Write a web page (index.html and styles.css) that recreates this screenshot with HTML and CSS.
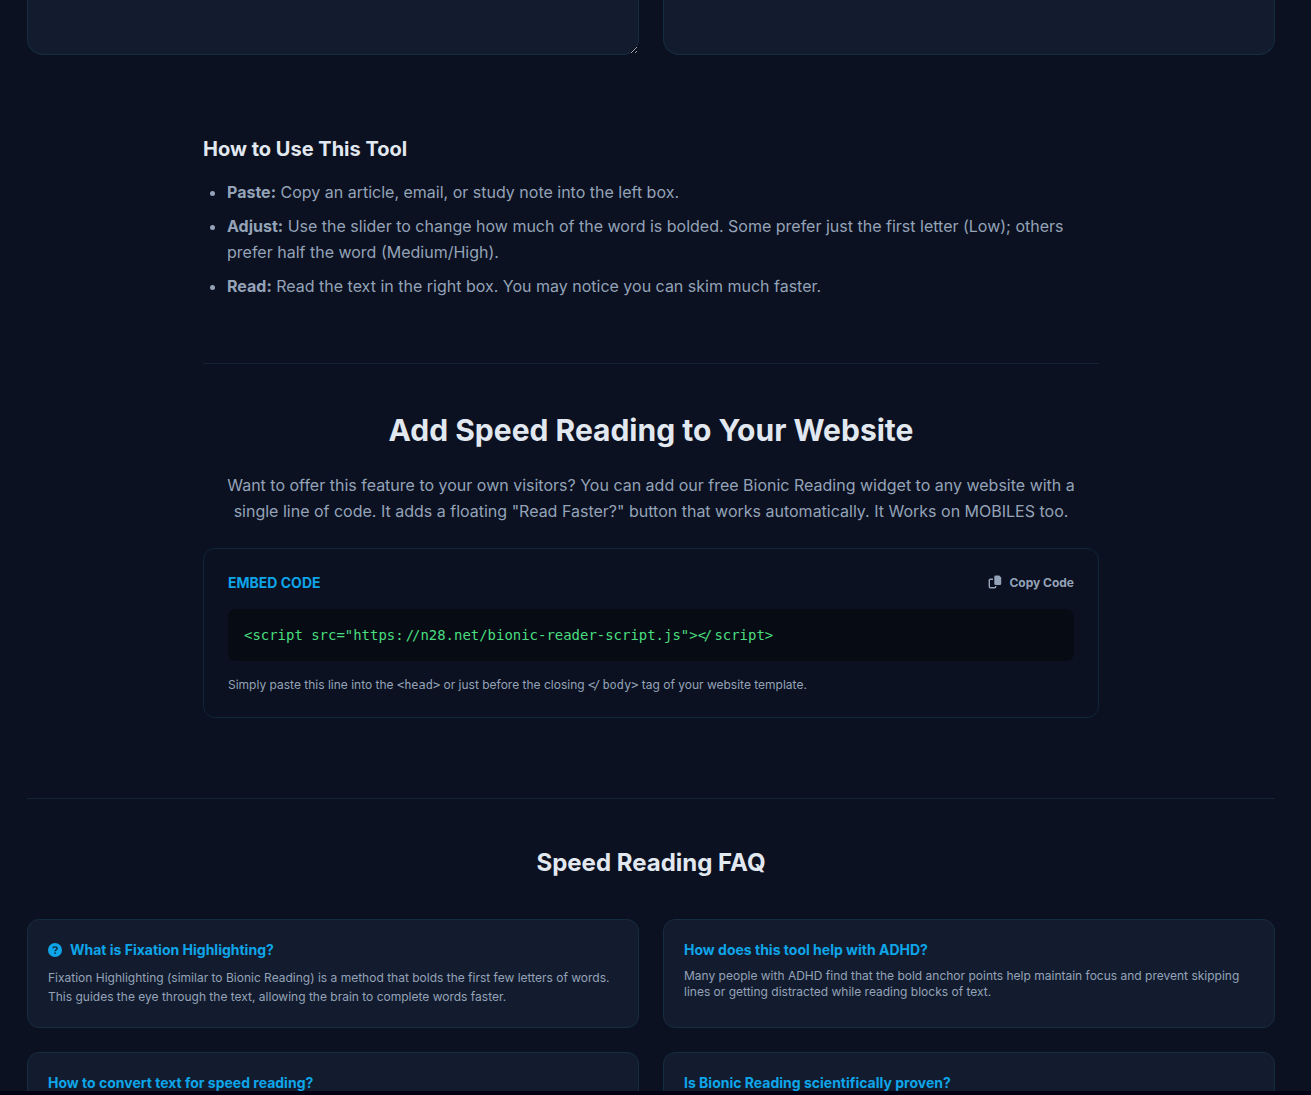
FILE: index.html
```html
<!DOCTYPE html>
<html lang="en">
<head>
    <meta charset="UTF-8">
    <meta name="viewport" content="width=device-width, initial-scale=1.0">
    <title>Speed Reading Tool</title>
    <link rel="stylesheet" href="styles.css">
</head>
<body>
    <main class="page">
        <div class="container">
            <div class="editor">
                <textarea class="panel" aria-label="Text"></textarea>
                <div class="panel"></div>
            </div>

            <article class="content">
                <section class="howto">
                    <h3>How to Use This Tool</h3>
                    <ul>
                        <li><strong>Paste:</strong> Copy an article, email, or study note into the left box.</li>
                        <li><strong>Adjust:</strong> Use the slider to change how much of the word is bolded. Some prefer just the first letter (Low); others prefer half the word (Medium/High).</li>
                        <li><strong>Read:</strong> Read the text in the right box. You may notice you can skim much faster.</li>
                    </ul>
                </section>

                <section class="embed">
                    <h2>Add Speed Reading to Your Website</h2>
                    <p class="lead">Want to offer this feature to your own visitors? You can add our free Bionic Reading widget to any website with a single line of code. It adds a floating "Read Faster?" button that works automatically. It Works on MOBILES too.</p>
                    <div class="embed-card">
                        <div class="embed-header">
                            <span class="embed-label">EMBED CODE</span>
                            <button class="copy-btn" type="button">
                                <svg width="14" height="14" viewBox="0 0 14 14" aria-hidden="true">
                                    <path d="M5 4.2H2.3a1 1 0 0 0-1 1v6.6a1 1 0 0 0 1 1h4.4a1 1 0 0 0 1-1V11" fill="none" stroke="currentColor" stroke-width="1.4"/>
                                    <path d="M7.6.5h3.6L13.2 2.500v6.300a1.300 1.300 0 0 1-1.300 1.300H7.600A1.300 1.300 0 0 1 6.300 8.800V1.800A1.300 1.300 0 0 1 7.600.5z" fill="currentColor"/>
                                </svg>
                                Copy Code
                            </button>
                        </div>
                        <pre class="code-box"><code>&lt;script src="https:<span class="lig">//</span>n28.net/bionic-reader-script.js"&gt;<span class="lig tag">&lt;/</span>script&gt;</code></pre>
                        <p class="note">Simply paste this line into the <code>&lt;head&gt;</code> or just before the closing <code><span class="lig tag">&lt;/</span>body&gt;</code> tag of your website template.</p>
                    </div>
                </section>
            </article>

            <section class="faq">
                <h2>Speed Reading FAQ</h2>
                <div class="faq-grid">
                    <div class="faq-card">
                        <h3>
                            <svg width="14" height="14" viewBox="0 0 14 14" aria-hidden="true">
                                <circle cx="7" cy="7" r="7" fill="currentColor"/>
                                <path d="M5 5.300C5 4.300 5.700 3.900 6.900 3.900S9.100 4.400 9.100 5.500C9.100 6.700 7.100 6.700 7.100 8.200" fill="none" stroke="#131c2e" stroke-width="1.300"/>
                                <circle cx="7.100" cy="10" r=".85" fill="#131c2e"/>
                            </svg>
                            What is Fixation Highlighting?
                        </h3>
                        <p class="relaxed">Fixation Highlighting (similar to Bionic Reading) is a method that bolds the first few letters of words. This guides the eye through the text, allowing the brain to complete words faster.</p>
                    </div>
                    <div class="faq-card">
                        <h3>How does this tool help with ADHD?</h3>
                        <p>Many people with ADHD find that the bold anchor points help maintain focus and prevent skipping lines or getting distracted while reading blocks of text.</p>
                    </div>
                    <div class="faq-card">
                        <h3>How to convert text for speed reading?</h3>
                    </div>
                    <div class="faq-card">
                        <h3>Is Bionic Reading scientifically proven?</h3>
                    </div>
                </div>
            </section>
        </div>
    </main>
    <footer class="bottom-bar"></footer>
</body>
</html>
```
FILE: styles.css
```css
* {
    box-sizing: border-box;
    margin: 0;
    padding: 0;
}
body {
    display: flex;
    flex-direction: column;
    height: 100vh;
    overflow: hidden;
    font-family: Inter, sans-serif;
    font-size: 16px;
    color: #94a3b8;
    background: #0b1120;
}
.page {
    flex: 1;
    min-height: 0;
    overflow: hidden;
    padding-right: 9px;
}
.bottom-bar {
    height: 4px;
    background: #030014;
}
.container {
    width: 1248px;
    margin: 0 auto;
}

/* reader boxes */
.editor {
    display: grid;
    grid-template-columns: 1fr 1fr;
    gap: 24px;
}
.panel {
    display: block;
    width: 100%;
    height: 55px;
    background: #131c2e;
    border: 1px solid #162d3f;
    border-top: none;
    border-radius: 0 0 16px 16px;
    outline: none;
    resize: vertical;
}

.content {
    width: 896px;
    margin: 0 auto;
    padding: 80px 0;
}
.howto {
    padding-bottom: 56px;
}
.howto h3 {
    font-size: 20px;
    line-height: 28px;
    margin-bottom: 16px;
    color: #e2e8f0;
}
.howto ul {
    padding-left: 24px;
    line-height: 26px;
}
.howto li {
    margin-bottom: 8px;
}

/* embed code */
.embed {
    border-top: 1px solid #132434;
    padding-top: 48px;
}
.embed h2 {
    font-size: 30px;
    line-height: 36px;
    margin-bottom: 24px;
    text-align: center;
    color: #e2e8f0;
}
.lead {
    line-height: 26px;
    margin-bottom: 24px;
    text-align: center;
}
.embed-card {
    border: 1px solid #11263a;
    border-radius: 12px;
    padding: 24px;
}
.embed-header {
    display: flex;
    justify-content: space-between;
    align-items: center;
    height: 18px;
    margin-bottom: 18px;
}
.embed-label {
    font-size: 14px;
    font-weight: 700;
    color: #0ea5e9;
}
.copy-btn {
    display: flex;
    align-items: center;
    gap: 7px;
    font-family: inherit;
    font-size: 12px;
    font-weight: 700;
    color: #94a3b8;
    background: none;
    border: none;
    cursor: pointer;
}
code {
    font-family: "DejaVu Sans Mono", monospace;
    font-size: 11.96px;
}
.code-box {
    height: 52px;
    padding: 16px;
    border-radius: 8px;
    background: #070b14;
    line-height: 20px;
    overflow: hidden;
}
.code-box code {
    font-size: 13.96px;
    color: #4ade80;
}
/* pull the slash pairs together */
.lig {
    letter-spacing: -0.16em;
    margin: 0 0.16em;
}
.lig.tag {
    margin: 0 0.32em 0 0;
}
.note {
    margin-top: 16px;
    font-size: 12px;
    line-height: 16px;
}

/* faq */
.faq {
    border-top: 1px solid #132434;
    padding-top: 48px;
}
.faq h2 {
    font-size: 24px;
    line-height: 32px;
    margin-bottom: 40px;
    text-align: center;
    color: #e2e8f0;
}
.faq-grid {
    display: grid;
    grid-template-columns: 1fr 1fr;
    gap: 24px;
}
.faq-card {
    padding: 20px;
    background: #131c2e;
    border: 1px solid #162d3f;
    border-radius: 12px;
}
.faq-card h3 {
    display: flex;
    align-items: center;
    gap: 8px;
    margin-bottom: 8px;
    font-size: 14px;
    line-height: 20px;
    color: #0ea5e9;
}
.faq-card p {
    font-size: 12px;
    line-height: 16px;
}
.faq-card .relaxed {
    line-height: 19px;
    padding-bottom: 1px;
}
```
